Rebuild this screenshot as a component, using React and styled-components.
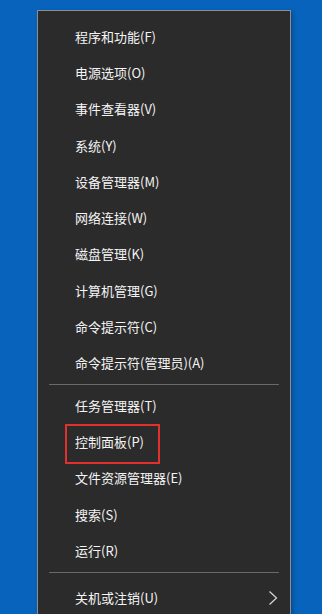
import React from "react";
import styled, { createGlobalStyle } from "styled-components";

const Global = createGlobalStyle`
  html, body { margin: 0; padding: 0; }
  body {
    background: #0863bd;
    width: 322px;
    height: 614px;
    overflow: hidden;
    font-family: "Noto Sans CJK SC", "Microsoft YaHei", "Noto Sans", sans-serif;
  }
`;

const Desktop = styled.div`
  width: 322px;
  height: 614px;
  padding: 10px 0 0 37px;
  box-sizing: border-box;
  overflow: hidden;
`;

const Menu = styled.div`
  width: 254px;
  height: 640px;
  box-sizing: border-box;
  background: #2b2b2b;
  border: 1px solid #8e8e8e;
  box-shadow: 2px 2px 4px rgba(0, 0, 0, 0.25);
  padding-top: 7px;
  display: flex;
  flex-direction: column;
`;

const Item = styled.div`
  position: relative;
  flex: none;
  height: 36.3px;
  display: flex;
  align-items: center;
  justify-content: space-between;
  padding: 0 12px 0 37px;
  color: #f4f4f4;
  font-size: 13px;
  line-height: 1;
`;

const Label = styled.span`
  white-space: nowrap;
`;

const Separator = styled.div`
  flex: none;
  height: 1px;
  background: #6a6a6a;
  margin: ${(p) => p.$top}px 11px ${(p) => p.$bottom}px 11px;
`;

const Highlight = styled.div`
  position: absolute;
  left: 27px;
  top: 1px;
  width: 95px;
  height: 40px;
  box-sizing: border-box;
  border: 2.5px solid #e2312d;
  pointer-events: none;
`;

const Chevron = () => (
  <svg width="10" height="16" viewBox="0 0 10 16" style={{ display: "block" }}>
    <path d="M1.5 1.5 L8.5 8 L1.5 14.5" fill="none" stroke="#d8d8d8" strokeWidth="1.2" />
  </svg>
);

const group1 = [
  "程序和功能(F)",
  "电源选项(O)",
  "事件查看器(V)",
  "系统(Y)",
  "设备管理器(M)",
  "网络连接(W)",
  "磁盘管理(K)",
  "计算机管理(G)",
  "命令提示符(C)",
  "命令提示符(管理员)(A)",
];

const group2 = [
  "任务管理器(T)",
  "控制面板(P)",
  "文件资源管理器(E)",
  "搜索(S)",
  "运行(R)",
];

export default function App() {
  return (
    <>
      <Global />
      <Desktop>
        <Menu>
          {group1.map((t) => (
            <Item key={t}>
              <Label>{t}</Label>
            </Item>
          ))}
          <Separator $top={3} $bottom={2} />
          {group2.map((t) => (
            <Item key={t}>
              <Label>{t}</Label>
              {t === "控制面板(P)" && <Highlight />}
            </Item>
          ))}
          <Separator $top={4} $bottom={6} />
          <Item>
            <Label>关机或注销(U)</Label>
            <Chevron />
          </Item>
        </Menu>
      </Desktop>
    </>
  );
}
